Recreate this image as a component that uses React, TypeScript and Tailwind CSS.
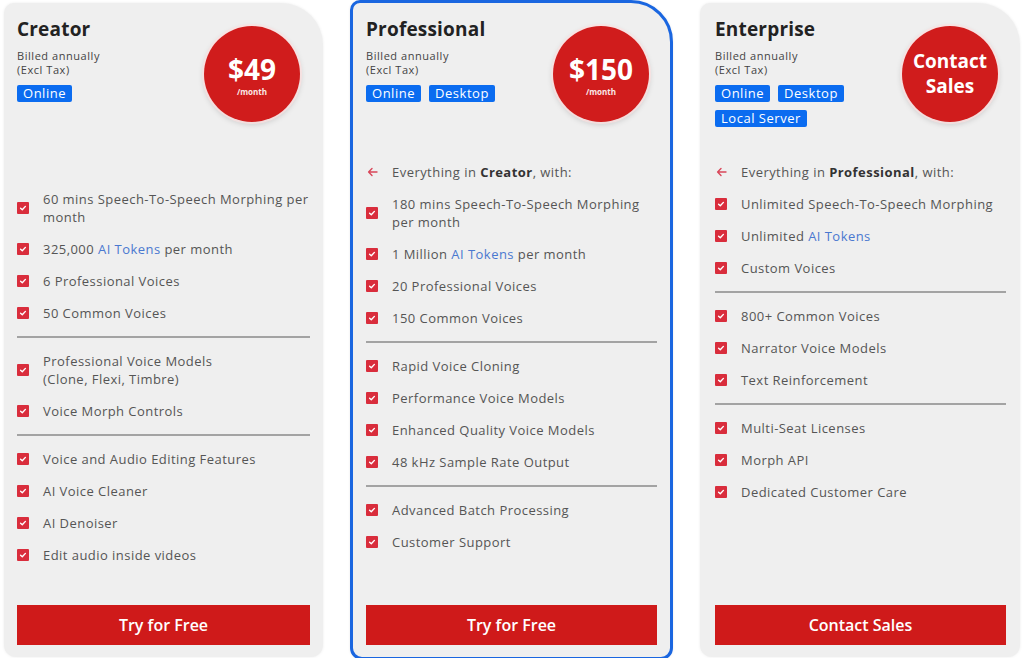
import React from "react";

type Item =
  | { kind: "item"; text: React.ReactNode }
  | { kind: "divider" }
  | { kind: "everything"; plan: string };

const Tokens = () => <span className="text-[#4a78d0]">AI Tokens</span>;

function Check() {
  return (
    <span className="flex h-[12px] w-[12px] shrink-0 items-center justify-center rounded-[1px] bg-[#d92d3c]">
      <svg width="8" height="8" viewBox="0 0 8 8" fill="none">
        <path d="M1.6 4.2 L3.3 5.8 L6.4 2.4" stroke="white" strokeWidth="1.4" strokeLinecap="round" strokeLinejoin="round" />
      </svg>
    </span>
  );
}

function Arrow() {
  return (
    <span className="flex h-[12px] w-[12px] shrink-0 items-center justify-center">
      <svg width="11" height="10" viewBox="0 0 11 10" fill="none">
        <path d="M10 5 H2 M5 1.6 L1.6 5 L5 8.4" stroke="#d9475a" strokeWidth="1.4" strokeLinecap="round" strokeLinejoin="round" />
      </svg>
    </span>
  );
}

function FeatureList({ items }: { items: Item[] }) {
  return (
    <div className="-mr-[4px] flex flex-col gap-[14px]">
      {items.map((it, i) => {
        if (it.kind === "divider")
          return <div key={i} className="mr-[4px] h-[2px] bg-[#a3a3a3]" />;
        if (it.kind === "everything")
          return (
            <div key={i} className="flex items-center gap-[14px]">
              <Arrow />
              <span className="text-[13px] leading-[18px] tracking-[0.035em] text-[#555]">
                Everything in <b className="font-bold text-[#333]">{it.plan}</b>, with:
              </span>
            </div>
          );
        return (
          <div key={i} className="flex items-center gap-[14px]">
            <Check />
            <span className="text-[13px] leading-[18px] tracking-[0.035em] text-[#555]">{it.text}</span>
          </div>
        );
      })}
    </div>
  );
}

function Badge({ children }: { children: React.ReactNode }) {
  return (
    <span className="inline-block rounded-[2px] bg-[#0b6cf0] px-[6px] text-[13px] leading-[17px] tracking-[0.04em] text-white">
      {children}
    </span>
  );
}

function Circle({ children }: { children: React.ReactNode }) {
  return (
    <div className="flex h-[96px] w-[96px] shrink-0 flex-col items-center justify-center rounded-full bg-[#d01c1c] text-white shadow-[0_0_0_2px_rgba(255,225,225,0.7),0_2px_6px_rgba(0,0,0,0.18)]">
      {children}
    </div>
  );
}

function Price({ value }: { value: string }) {
  return (
    <>
      <span className="mt-[3px] text-[28px] font-bold leading-[28px]">{value}</span>
      <span className="mt-[4px] text-[8px] font-bold leading-[10px] opacity-90">/month</span>
    </>
  );
}

function Card({
  title,
  badges,
  circle,
  items,
  button,
  featuresTop,
  className,
  circleRight,
}: {
  title: string;
  badges: string[];
  circle: React.ReactNode;
  items: Item[];
  button: string;
  featuresTop: number;
  className: string;
  circleRight: string;
}) {
  return (
    <div className={"flex flex-col bg-[#efefef] rounded-tl-[10px] rounded-tr-[42px] rounded-b-[12px] shadow-[0_0_3px_rgba(0,0,0,0.08)] " + className}>
      <div className="flex h-[146px] items-start justify-between">
        <div className="flex min-w-0 flex-col">
          <div className="text-[19px] font-bold leading-[24px] tracking-[0.01em] text-[#222]">{title}</div>
          <div className="mt-[8px] text-[11px] leading-[14px] tracking-[0.05em] text-[#444]">
            Billed annually
            <br />
            (Excl Tax)
          </div>
          <div className="mt-[8px] flex w-[170px] flex-wrap gap-[8px]">
            {badges.map((b) => (
              <Badge key={b}>{b}</Badge>
            ))}
          </div>
        </div>
        <div className={"mt-[9px] " + circleRight}>
          <Circle>{circle}</Circle>
        </div>
      </div>
      <div style={{ marginTop: featuresTop }}>
        <FeatureList items={items} />
      </div>
      <button className="mt-auto h-[40px] w-full bg-[#cf1a1a] text-[16px] font-semibold text-white">
        {button}
      </button>
    </div>
  );
}

export default function App() {
  const creator: Item[] = [
    { kind: "item", text: "60 mins Speech-To-Speech Morphing per month" },
    { kind: "item", text: <>325,000 <Tokens /> per month</> },
    { kind: "item", text: "6 Professional Voices" },
    { kind: "item", text: "50 Common Voices" },
    { kind: "divider" },
    { kind: "item", text: <>Professional Voice Models<br />(Clone, Flexi, Timbre)</> },
    { kind: "item", text: "Voice Morph Controls" },
    { kind: "divider" },
    { kind: "item", text: "Voice and Audio Editing Features" },
    { kind: "item", text: "AI Voice Cleaner" },
    { kind: "item", text: "AI Denoiser" },
    { kind: "item", text: "Edit audio inside videos" },
  ];
  const pro: Item[] = [
    { kind: "everything", plan: "Creator" },
    { kind: "item", text: <>180 mins Speech-To-Speech Morphing<br />per month</> },
    { kind: "item", text: <>1 Million <Tokens /> per month</> },
    { kind: "item", text: "20 Professional Voices" },
    { kind: "item", text: "150 Common Voices" },
    { kind: "divider" },
    { kind: "item", text: "Rapid Voice Cloning" },
    { kind: "item", text: "Performance Voice Models" },
    { kind: "item", text: "Enhanced Quality Voice Models" },
    { kind: "item", text: "48 kHz Sample Rate Output" },
    { kind: "divider" },
    { kind: "item", text: "Advanced Batch Processing" },
    { kind: "item", text: "Customer Support" },
  ];
  const ent: Item[] = [
    { kind: "everything", plan: "Professional" },
    { kind: "item", text: "Unlimited Speech-To-Speech Morphing" },
    { kind: "item", text: <>Unlimited <Tokens /></> },
    { kind: "item", text: "Custom Voices" },
    { kind: "divider" },
    { kind: "item", text: "800+ Common Voices" },
    { kind: "item", text: "Narrator Voice Models" },
    { kind: "item", text: "Text Reinforcement" },
    { kind: "divider" },
    { kind: "item", text: "Multi-Seat Licenses" },
    { kind: "item", text: "Morph API" },
    { kind: "item", text: "Dedicated Customer Care" },
  ];

  return (
    <div
      className="flex h-[658px] w-[1024px] items-start gap-[27px] overflow-hidden bg-white pl-[4px] pt-[3px]"
      style={{ fontFamily: '"Open Sans", "Noto Sans", sans-serif' }}
    >
      <Card
        title="Creator"
        badges={["Online"]}
        circle={<Price value="$49" />}
        items={creator}
        button="Try for Free"
        featuresTop={27}
        className="h-[654px] w-[319px] px-[13px] pb-[12px] pt-[14px]"
        circleRight="mr-[10px]"
      />
      <Card
        title="Professional"
        badges={["Online", "Desktop"]}
        circle={<Price value="$150" />}
        items={pro}
        button="Try for Free"
        featuresTop={0}
        className="-mt-[3px] h-[660px] w-[323px] border-[3px] border-[#1a66e0] px-[13px] pb-[12px] pt-[14px]"
        circleRight="mr-[8px]"
      />
      <Card
        title="Enterprise"
        badges={["Online", "Desktop", "Local Server"]}
        circle={
          <span className="text-center text-[19px] font-bold leading-[25px]">
            Contact
            <br />
            Sales
          </span>
        }
        items={ent}
        button="Contact Sales"
        featuresTop={0}
        className="h-[654px] w-[320px] pl-[15px] pr-[14px] pb-[12px] pt-[14px]"
        circleRight="mr-[8px]"
      />
    </div>
  );
}
